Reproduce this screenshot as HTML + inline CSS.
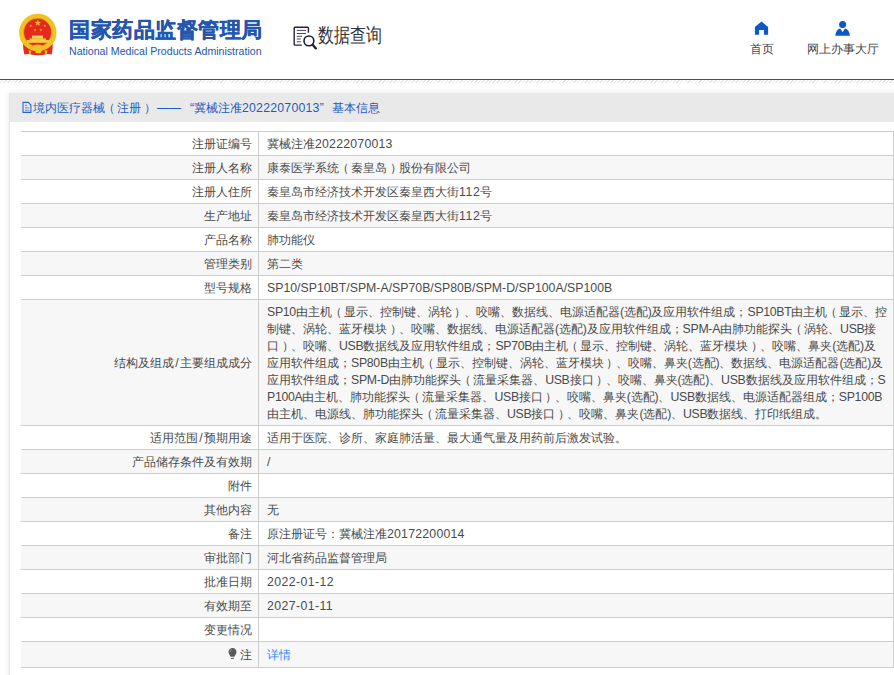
<!DOCTYPE html>
<html><head><meta charset="utf-8">
<style>
*{margin:0;padding:0;box-sizing:border-box}
html,body{width:894px;height:675px;overflow:hidden;background:#fff}
body{font-family:"Liberation Sans",sans-serif;font-size:12px;color:#333;position:relative;text-spacing-trim:space-all}
.abs{position:absolute}
#hdr{position:absolute;left:0;top:0;width:894px;height:79px;background:#fff}
#bline{position:absolute;left:0;top:79px;width:894px;height:1px;background:#0a5bc2}
#hatch{position:absolute;left:0;top:80px;width:894px;height:3px;
 background:repeating-linear-gradient(135deg,rgba(0,0,0,0) 0 1.5px,rgba(160,160,160,0.25) 1.5px 2.6px)}
#title{left:69px;top:16px;font-size:21px;font-weight:bold;color:#2456ae;white-space:nowrap;letter-spacing:0.5px;-webkit-text-stroke:0.4px #2456ae}
#etitle{left:69px;top:44.5px;font-size:10.6px;letter-spacing:0px;color:#2456ae;white-space:nowrap}
#sq{left:318px;top:22px;font-size:20px;color:#333;white-space:nowrap;transform:scaleX(0.8);transform-origin:0 0}
.nav{font-size:12px;color:#444;white-space:nowrap}
#box{position:absolute;left:9px;top:93px;width:900px;height:600px;background:#fff;border-left:1px solid #e6e6e6;box-shadow:0 0 6px rgba(0,0,0,0.09)}
#bar{position:absolute;left:0;top:0;width:900px;height:29px;background:#e9e9e9;border-bottom:1px solid #e6eaf4}
.bt{position:absolute;top:8px;color:#1f5cc0;white-space:nowrap;font-size:12px;line-height:14px}
table{position:absolute;left:11px;top:38px;width:873px;border-collapse:collapse;table-layout:fixed}
td{border-top:1px solid #cdcdcd;border-bottom:1px solid #cdcdcd;font-size:12px;line-height:17px;padding:4px 0 2px;white-space:nowrap;color:#4a4a4a;height:24px}
td.l{width:237px;text-align:right;padding-right:6px;border-right:1px solid #cdcdcd}
td.v{padding-left:8.5px;border-right:1px solid #cdcdcd}
tr:nth-child(even) td{background:#f7f7f7}
tr.last td{height:26px;padding-top:4px}
a{color:#2f86f6;text-decoration:none}
.e{font-size:12.3px}
.d{letter-spacing:0.22px}
.n{letter-spacing:-0.3px}
.lp{position:relative;left:-2px}
.rp{position:relative;left:2.5px}
.sl{padding:0 0.8px}
</style></head><body>
<div id="hdr">
  <svg class="abs" style="left:0;top:0" width="64" height="60" viewBox="0 0 64 60">
    <path d="M23.2 42 Q22.6 48 24.3 54.6 Q27 53.8 30 54.2 Q34 55.3 38 55.2 Q42 55.3 46 54.2 Q49 53.8 51.7 54.6 Q53.2 48 52.6 42 Z" fill="#e42a22"/>
    <circle cx="37.8" cy="32.5" r="16.4" fill="none" stroke="#f2c21e" stroke-width="4.6"/>
    <circle cx="37.6" cy="32.3" r="14" fill="#e8281f"/>
    <polygon points="37.90,19.50 38.72,21.87 41.23,21.92 39.23,23.43 39.96,25.83 37.90,24.40 35.84,25.83 36.57,23.43 34.57,21.92 37.08,21.87" fill="#e8c21c"/>
    <polygon points="30.70,24.40 31.08,25.37 32.13,25.44 31.32,26.10 31.58,27.11 30.70,26.55 29.82,27.11 30.08,26.10 29.27,25.44 30.32,25.37" fill="#e0bc1c"/>
    <polygon points="44.90,24.40 45.28,25.37 46.33,25.44 45.52,26.10 45.78,27.11 44.90,26.55 44.02,27.11 44.28,26.10 43.47,25.44 44.52,25.37" fill="#e0bc1c"/>
    <polygon points="35.00,28.50 35.38,29.47 36.43,29.54 35.62,30.20 35.88,31.21 35.00,30.65 34.12,31.21 34.38,30.20 33.57,29.54 34.62,29.47" fill="#e0bc1c"/>
    <polygon points="40.90,28.50 41.28,29.47 42.33,29.54 41.52,30.20 41.78,31.21 40.90,30.65 40.02,31.21 40.28,30.20 39.47,29.54 40.52,29.47" fill="#e0bc1c"/>
    <circle cx="37.6" cy="32.3" r="14.1" fill="none" stroke="#d9a916" stroke-width="0.7"/>
    <rect x="32" y="35.6" width="11" height="3" fill="#f6d65a"/>
    <rect x="29.5" y="38.4" width="16.5" height="1.6" fill="#f4cc3a"/>
    <rect x="27" y="40" width="23.2" height="2.8" fill="#f6d040"/>
    <ellipse cx="37.6" cy="46.6" rx="4.6" ry="2" fill="#f2c21e"/>
    <ellipse cx="38.4" cy="51.8" rx="3" ry="1.5" fill="#f2c81e"/>
    <path d="M28.5 50.5 L31.5 50.5 L30.6 54.3 L29.4 54.3Z" fill="#f2c81e"/>
    <path d="M44.5 50.5 L47.5 50.5 L46.6 54.3 L45.4 54.3Z" fill="#f2c81e"/>
  </svg>
  <div id="title" class="abs">国家药品监督管理局</div>
  <div id="etitle" class="abs">National Medical Products Administration</div>
  <svg class="abs" style="left:290px;top:22px" width="30" height="30" viewBox="0 0 30 30">
    <path d="M11.8 23.1 H5 Q4.2 23.1 4.2 22.3 V6.1 Q4.2 5.3 5 5.3 H17.6 Q18.4 5.3 18.4 6.1 V10.7" fill="none" stroke="#25253a" stroke-width="1.4"/>
    <path d="M6.8 8.4 H16 M6.8 11.5 H16 M6.8 14.3 H12 M6.8 17 H10.8 M6.8 19.8 H10.8" stroke="#33334a" stroke-width="0.9"/>
    <circle cx="18.9" cy="18.9" r="4.9" fill="none" stroke="#1e1e32" stroke-width="1.6"/>
    <path d="M22.6 22.7 L25.9 26.4" stroke="#1e1e32" stroke-width="2.2" stroke-linecap="round"/>
  </svg>
  <div id="sq" class="abs">数据查询</div>
  <svg class="abs" style="left:754px;top:21px" width="15" height="14" viewBox="0 0 15 14">
    <path d="M7.5 0.6 L14.1 5.9 V13.8 H10 V9 H5.1 V13.8 H0.9 V5.9Z" fill="#0a5ac4"/>
  </svg>
  <div class="abs nav" style="left:750px;top:41px">首页</div>
  <svg class="abs" style="left:835px;top:20px" width="16" height="16" viewBox="0 0 16 16">
    <circle cx="7.6" cy="4.5" r="3.5" fill="#0a5ac4"/>
    <path d="M0.3 15.8 Q1 9.5 5.2 8.6 L7.6 11.9 L10 8.6 Q14.3 9.5 14.9 15.8Z" fill="#0a5ac4"/>
  </svg>
  <div class="abs nav" style="left:807px;top:41px">网上办事大厅</div>
</div>
<div id="bline"></div>
<div id="hatch"></div>

<div id="box">
  <div id="bar">
    <svg class="abs" style="left:12px;top:8px" width="11" height="13" viewBox="0 0 11 13">
      <path d="M1 1.4 H6.3 L8.9 4 V11.4 H1Z" fill="none" stroke="#2a62cc" stroke-width="1.1"/>
      <path d="M3 4.4 H5 M3 6.9 H7.2 M3 9.3 H7.2" stroke="#4a7ed8" stroke-width="0.9"/>
    </svg>
    <div class="bt" style="left:23px">境内医疗器械<span class="lp">（</span>注册<span class="rp">）</span></div><div class="bt" style="left:147px">——</div><div class="bt" style="left:180px">“冀械注准<span style="font-size:12.3px;letter-spacing:0.22px">20222070013</span>”</div><div class="bt" style="left:322px">基本信息</div>
  </div>
  <table>
    <tr><td class="l">注册证编号</td><td class="v">冀械注准<span class="e d">20222070013</span></td></tr>
    <tr><td class="l">注册人名称</td><td class="v">康泰医学系统<span class="lp">（</span>秦皇岛<span class="rp">）</span>股份有限公司</td></tr>
    <tr><td class="l">注册人住所</td><td class="v">秦皇岛市经济技术开发区秦皇西大街<span class="e" style="letter-spacing:0.6px">112</span>号</td></tr>
    <tr><td class="l">生产地址</td><td class="v">秦皇岛市经济技术开发区秦皇西大街<span class="e" style="letter-spacing:0.6px">112</span>号</td></tr>
    <tr><td class="l">产品名称</td><td class="v">肺功能仪</td></tr>
    <tr><td class="l">管理类别</td><td class="v">第二类</td></tr>
    <tr><td class="l">型号规格</td><td class="v"><span class="e">SP10/SP10BT/SPM-A/SP70B/SP80B/SPM-D/SP100A/SP100B</span></td></tr>
    <tr><td class="l">结构及组成<span class="e sl">/</span>主要组成成分</td><td class="v"><span class="e n">SP10</span>由主机<span class="lp">（</span>显示、控制键、涡轮<span class="rp">）</span>、咬嘴、数据线、电源适配器<span class="e n">(</span>选配<span class="e n">)</span>及应用软件组成；<span class="e n">SP10BT</span>由主机<span class="lp">（</span>显示、控<br>制键、涡轮、蓝牙模块<span class="rp">）</span>、咬嘴、数据线、电源适配器<span class="e n">(</span>选配<span class="e n">)</span>及应用软件组成；<span class="e n">SPM-A</span>由肺功能探头<span class="lp">（</span>涡轮、<span class="e n">USB</span>接<br>口<span class="rp">）</span>、咬嘴、<span class="e n">USB</span>数据线及应用软件组成；<span class="e n">SP70B</span>由主机<span class="lp">（</span>显示、控制键、涡轮、蓝牙模块<span class="rp">）</span>、咬嘴、鼻夹<span class="e n">(</span>选配<span class="e n">)</span>及<br>应用软件组成；<span class="e n">SP80B</span>由主机<span class="lp">（</span>显示、控制键、涡轮、蓝牙模块<span class="rp">）</span>、咬嘴、鼻夹<span class="e n">(</span>选配<span class="e n">)</span>、数据线、电源适配器<span class="e n">(</span>选配<span class="e n">)</span>及<br>应用软件组成；<span class="e n">SPM-D</span>由肺功能探头<span class="lp">（</span>流量采集器、<span class="e n">USB</span>接口<span class="rp">）</span>、咬嘴、鼻夹<span class="e n">(</span>选配<span class="e n">)</span>、<span class="e n">USB</span>数据线及应用软件组成；<span class="e n">S</span><br><span class="e n">P100A</span>由主机、肺功能探头<span class="lp">（</span>流量采集器、<span class="e n">USB</span>接口<span class="rp">）</span>、咬嘴、鼻夹<span class="e n">(</span>选配<span class="e n">)</span>、<span class="e n">USB</span>数据线、电源适配器组成；<span class="e n">SP100B</span><br>由主机、电源线、肺功能探头<span class="lp">（</span>流量采集器、<span class="e n">USB</span>接口<span class="rp">）</span>、咬嘴、鼻夹<span class="e n">(</span>选配<span class="e n">)</span>、<span class="e n">USB</span>数据线、打印纸组成。</td></tr>
    <tr><td class="l">适用范围<span class="e sl">/</span>预期用途</td><td class="v">适用于医院、诊所、家庭肺活量、最大通气量及用药前后激发试验。</td></tr>
    <tr><td class="l">产品储存条件及有效期</td><td class="v"><span class="e">/</span></td></tr>
    <tr><td class="l">附件</td><td class="v"></td></tr>
    <tr><td class="l">其他内容</td><td class="v">无</td></tr>
    <tr><td class="l">备注</td><td class="v">原注册证号：冀械注准<span class="e d">20172200014</span></td></tr>
    <tr><td class="l">审批部门</td><td class="v">河北省药品监督管理局</td></tr>
    <tr><td class="l">批准日期</td><td class="v"><span class="e" style="letter-spacing:0.4px">2022-01-12</span></td></tr>
    <tr><td class="l">有效期至</td><td class="v"><span class="e" style="letter-spacing:0.4px">2027-01-11</span></td></tr>
    <tr><td class="l">变更情况</td><td class="v"></td></tr>
    <tr class="last"><td class="l"><svg width="10" height="12" viewBox="0 0 10 12" style="vertical-align:0px;margin-right:2px"><path d="M4.5 1 C6.9 1 8.5 2.8 8.5 5 C8.5 7 7 8 6.5 9.8 H2.5 C2 8 0.5 7 0.5 5 C0.5 2.8 2.1 1 4.5 1Z" fill="#5a5a5a"/><path d="M2.1 5.2 Q2.1 2.8 4 2.2" fill="none" stroke="#9a9a9a" stroke-width="0.8"/><rect x="2.9" y="10.9" width="3.1" height="1" fill="#5a5a5a"/></svg>注</td><td class="v"><a>详情</a></td></tr>
  </table>
</div>
</body></html>
